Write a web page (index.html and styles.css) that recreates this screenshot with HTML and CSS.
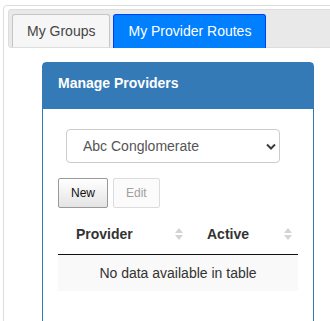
FILE: index.html
```html
<!DOCTYPE html>
<html lang="en">

<head>
    <meta charset="UTF-8">
    <meta name="viewport" content="width=device-width, initial-scale=1.0">
    <title>Provider Routes</title>

    <link rel="stylesheet" href="styles.css">
</head>

<body>
    <div class="tabs">
        <ul class="tab-nav">
            <li class="tab"><a href="#groups">My Groups</a></li>
            <li class="tab active"><a href="#routes">My Provider Routes</a></li>
        </ul>
        <div class="tab-panel" id="routes">
            <div class="panel">
                <div class="panel-heading">Manage Providers</div>
                <div class="panel-body">
                    <div class="select-wrap">
                        <select class="form-control">
                            <option>Abc Conglomerate</option>
                        </select>
                        <svg class="chevron" width="10" height="7" viewBox="0 0 10 7">
                            <path d="M1 1.5 L5 5.5 L9 1.5" fill="none" stroke="#3c3c3c" stroke-width="2"/>
                        </svg>
                    </div>
                    <div class="toolbar">
                        <button type="button" class="btn">New</button>
                        <button type="button" class="btn" disabled>Edit</button>
                    </div>
                    <table class="data-table">
                        <thead>
                            <tr>
                                <th class="col-provider">Provider
                                    <svg class="sort" width="8" height="14" viewBox="0 0 8 14">
                                        <path d="M0 6 L4 1 L8 6 Z M0 8 L4 13 L8 8 Z" fill="#d4d4d4"/>
                                    </svg>
                                </th>
                                <th class="col-active">Active
                                    <svg class="sort" width="8" height="14" viewBox="0 0 8 14">
                                        <path d="M0 6 L4 1 L8 6 Z M0 8 L4 13 L8 8 Z" fill="#d4d4d4"/>
                                    </svg>
                                </th>
                            </tr>
                        </thead>
                        <tbody>
                            <tr>
                                <td colspan="2" class="empty">No data available in table</td>
                            </tr>
                        </tbody>
                    </table>
                </div>
            </div>
        </div>
    </div>
</body>

</html>
```

FILE: styles.css
```css
body {
    margin: 0;
    padding: 5px 0 0 3px;
    font-family: "Liberation Sans", Arial, sans-serif;
    font-size: 14px;
    color: #333;
    overflow: hidden;
}

.tabs {
    width: 360px;
    height: 340px;
    border: 1px solid #dddddd;
    border-radius: 4px;
    padding: 3px 4px;
}

.tab-nav {
    display: flex;
    list-style: none;
    margin: 0;
    padding: 4px 3px 0;
    background: #e9e9e9;
    border: 1px solid #dddddd;
    border-radius: 3px;
}

.tab {
    margin-right: 3px;
    border: 1px solid #c5c5c5;
    border-bottom: 0;
    border-radius: 3px 3px 0 0;
    background: #f6f6f6;
}

.tab a {
    display: block;
    padding: 8px 14px;
    line-height: 16px;
    color: #454545;
    text-decoration: none;
}

.tab.active {
    background: #007fff;
    border-color: #003eff;
    margin-bottom: -1px;
    padding-bottom: 1px;
}

.tab.active a {
    color: #fff;
}

.tab-panel {
    padding: 14px 0 0 34px;
}

.panel {
    width: 272px;
    box-sizing: border-box;
    border: 1px solid #337ab7;
    border-radius: 4px;
}

.panel-heading {
    background: #337ab7;
    color: #fff;
    font-weight: bold;
    line-height: 20px;
    padding: 10px 15px 16px;
}

.panel-body {
    padding: 15px;
    height: 250px;
}

.select-wrap {
    position: relative;
    width: 214px;
    margin: 5px 8px 0;
}

.form-control {
    display: block;
    width: 100%;
    height: 34px;
    box-sizing: border-box;
    padding: 6px 12px 6px 16px;
    border: 1px solid #cccccc;
    border-radius: 4px;
    background: #fff;
    font-family: inherit;
    font-size: 14px;
    color: #555;
    appearance: none;
    -webkit-appearance: none;
}

.chevron {
    position: absolute;
    right: 4px;
    top: 14px;
}

.toolbar {
    display: flex;
    gap: 5px;
    margin-top: 15px;
}

.btn {
    height: 30px;
    padding: 0 12px;
    font-family: inherit;
    font-size: 12px;
    color: #111;
    border: 1px solid #999;
    border-radius: 2px;
    background: linear-gradient(#ffffff, #e4e4e4);
}

.btn:disabled {
    color: #a0a0a0;
    border-color: #dcdcdc;
    background: #fbfbfb;
}

.data-table {
    width: 240px;
    margin-top: 6px;
    border-collapse: separate;
    border-spacing: 0;
}

.data-table th {
    position: relative;
    text-align: left;
    font-weight: bold;
    line-height: 20px;
    padding: 10px 18px;
    border-bottom: 1px solid #111;
}

.col-provider {
    width: 131px;
    box-sizing: border-box;
}

.sort {
    position: absolute;
    right: 6px;
    top: 13px;
}

.data-table td.empty {
    padding: 8px 10px;
    line-height: 20px;
    text-align: center;
    background: #f9f9f9;
}
```
